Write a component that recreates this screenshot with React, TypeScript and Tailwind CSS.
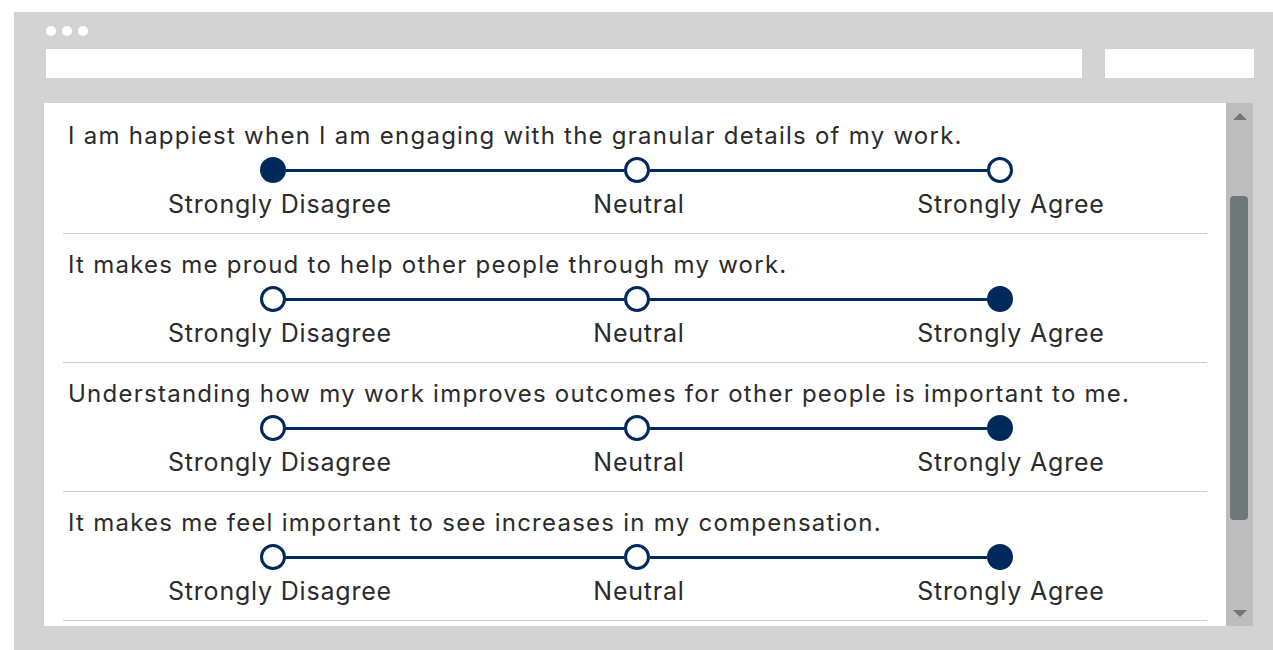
type Question = { text: string; value: 0 | 1 | 2 }

const questions: Question[] = [
  { text: 'I am happiest when I am engaging with the granular details of my work.', value: 0 },
  { text: 'It makes me proud to help other people through my work.', value: 2 },
  { text: 'Understanding how my work improves outcomes for other people is important to me.', value: 2 },
  { text: 'It makes me feel important to see increases in my compensation.', value: 2 },
]

function Dot({ filled }: { filled: boolean }) {
  return (
    <div
      className={
        filled
          ? 'w-[26px] h-[26px] shrink-0 rounded-full border-[3px] border-[#002a5c] bg-[#002a5c]'
          : 'w-[26px] h-[26px] shrink-0 rounded-full border-[3px] border-[#002a5c] bg-white'
      }
    />
  )
}

function Scale({ value }: { value: number }) {
  return (
    <div>
      <div className="flex items-center ml-[197px] w-[753px]">
        <Dot filled={value === 0} />
        <div className="flex-1 h-[3px] bg-[#002a5c]" />
        <Dot filled={value === 1} />
        <div className="flex-1 h-[3px] bg-[#002a5c]" />
        <Dot filled={value === 2} />
      </div>
      <div className="flex mt-[6px] ml-[67px] text-[25px] leading-[30px] tracking-[0.8px] text-[#2b2b2b]">
        <span className="w-[300px] text-center">Strongly Disagree</span>
        <span className="w-[300px] text-center ml-[59px]">Neutral</span>
        <span className="w-[300px] text-center ml-[72px]">Strongly Agree</span>
      </div>
    </div>
  )
}

function Row({ q }: { q: Question }) {
  return (
    <div className="mx-[19px] pt-[17px] pb-[14px] border-b border-[#cccccc]">
      <p className="pl-[5px] text-[24px] leading-[28px] tracking-[1.25px] text-[#2b2b2b] mb-[7px] whitespace-nowrap">
        {q.text}
      </p>
      <Scale value={q.value} />
    </div>
  )
}

function ScrollBar() {
  return (
    <div className="w-[27px] bg-[#bdbdbd] flex flex-col items-center pt-[10px] pb-[9px]">
      <svg width="14" height="7" viewBox="0 0 14 7">
        <polygon points="0,7 7,0 14,7" fill="#6e7878" />
      </svg>
      <div className="mt-[76px] h-[324px] w-[18px] ml-[-1px] rounded-[4px] bg-[#6e7878]" />
      <div className="flex-1" />
      <svg width="14" height="7" viewBox="0 0 14 7">
        <polygon points="0,0 14,0 7,7" fill="#6e7878" />
      </svg>
    </div>
  )
}

export default function App() {
  return (
    <div
      className="w-[1273px] h-[650px] bg-white pt-[12px] pl-[14px] overflow-hidden"
      style={{ fontFamily: 'Inter, "Noto Sans", sans-serif' }}
    >
      <div className="h-[638px] bg-[#d3d3d3] flex flex-col pt-[14px]">
        <div className="flex gap-[6px] ml-[32px]">
          <div className="w-[10px] h-[10px] rounded-full bg-white" />
          <div className="w-[10px] h-[10px] rounded-full bg-white" />
          <div className="w-[10px] h-[10px] rounded-full bg-white" />
        </div>
        <div className="flex mt-[13px] ml-[32px] gap-[23px]">
          <div className="w-[1036px] h-[29px] bg-white" />
          <div className="w-[149px] h-[29px] bg-white" />
        </div>
        <div className="mt-[25px] ml-[30px] w-[1209px] h-[523px] bg-white flex">
          <div className="flex-1 pt-[2px] overflow-hidden">
            {questions.map((q, i) => (
              <Row key={i} q={q} />
            ))}
          </div>
          <ScrollBar />
        </div>
      </div>
    </div>
  )
}
